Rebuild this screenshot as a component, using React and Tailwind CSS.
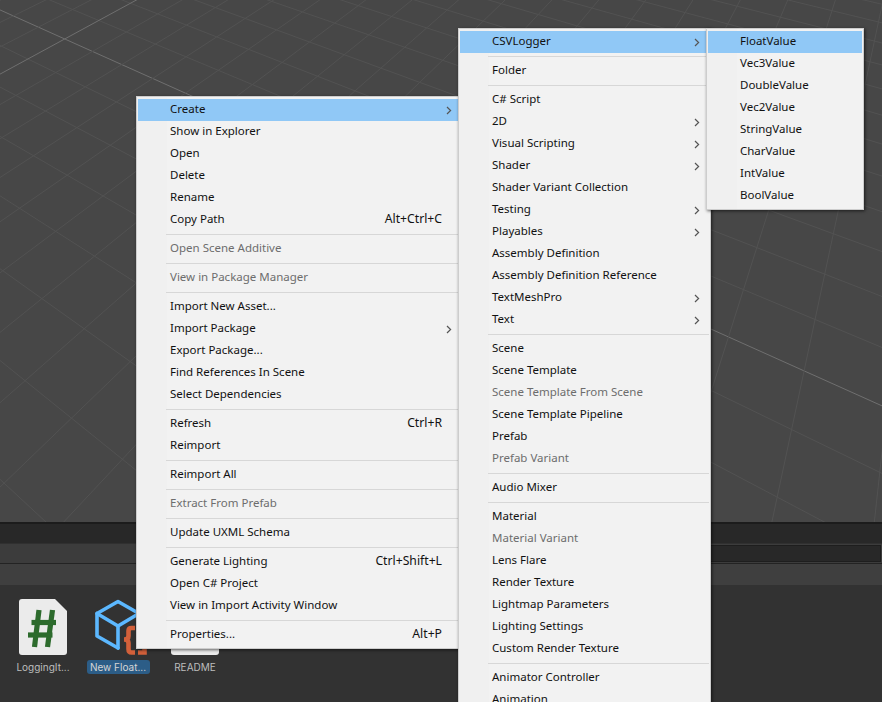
import React from "react";

const VA = [-980, -430];
const VB = [981, -459];

function gridLines() {
  const out = [];
  for (let k = -32; k <= 8; k++) {
    const t = 0.002203 - 0.00016 * k;
    const dx = 980 * t, dy = 1 - 14 * t;
    const s = 4000 / Math.hypot(dx, dy);
    out.push({ key: "a" + k, x1: VA[0], y1: VA[1], x2: VA[0] + dx * s, y2: VA[1] + dy * s, axis: k === 0 });
  }
  for (let k = -30; k <= 18; k++) {
    const t = 0.00193 - 0.000107 * k;
    const dx = -VB[0] * t, dy = 1 + 15 * t;
    const s = 4000 / Math.hypot(dx, dy);
    out.push({ key: "b" + k, x1: VB[0], y1: VB[1], x2: VB[0] + dx * s, y2: VB[1] + dy * s, axis: k === 0 });
  }
  return out;
}

const SEP = "-";
const menu1 = [
  ["Create", { arrow: true, active: true }], ["Show in Explorer"], ["Open"], ["Delete"], ["Rename"], ["Copy Path", { sc: "Alt+Ctrl+C" }], SEP,
  ["Open Scene Additive", { off: true }], SEP,
  ["View in Package Manager", { off: true }], SEP,
  ["Import New Asset..."], ["Import Package", { arrow: true }], ["Export Package..."], ["Find References In Scene"], ["Select Dependencies"], SEP,
  ["Refresh", { sc: "Ctrl+R" }], ["Reimport"], SEP,
  ["Reimport All"], SEP,
  ["Extract From Prefab", { off: true }], SEP,
  ["Update UXML Schema"], SEP,
  ["Generate Lighting", { sc: "Ctrl+Shift+L" }], ["Open C# Project"], ["View in Import Activity Window"], SEP,
  ["Properties...", { sc: "Alt+P" }],
];
const menu2 = [
  ["CSVLogger", { arrow: true, active: true }], SEP,
  ["Folder"], SEP,
  ["C# Script"], ["2D", { arrow: true }], ["Visual Scripting", { arrow: true }], ["Shader", { arrow: true }], ["Shader Variant Collection"], ["Testing", { arrow: true }], ["Playables", { arrow: true }], ["Assembly Definition"], ["Assembly Definition Reference"], ["TextMeshPro", { arrow: true }], ["Text", { arrow: true }], SEP,
  ["Scene"], ["Scene Template"], ["Scene Template From Scene", { off: true }], ["Scene Template Pipeline"], ["Prefab"], ["Prefab Variant", { off: true }], SEP,
  ["Audio Mixer"], SEP,
  ["Material"], ["Material Variant", { off: true }], ["Lens Flare"], ["Render Texture"], ["Lightmap Parameters"], ["Lighting Settings"], ["Custom Render Texture"], SEP,
  ["Animator Controller"], ["Animation"],
];
const menu3 = [
  ["FloatValue", { active: true }], ["Vec3Value"], ["DoubleValue"], ["Vec2Value"], ["StringValue"], ["CharValue"], ["IntValue"], ["BoolValue"],
];

function Chevron({ className }) {
  return (
    <svg width="6" height="9" viewBox="0 0 6 9" className={"absolute top-[7px] " + className}>
      <path d="M1 1 L4.6 4.5 L1 8" fill="none" stroke="#555555" strokeWidth="1.2" />
    </svg>
  );
}

function Menu({ items, className, rowClass = "pr-[14px]", chevronClass = "right-[9px]" }) {
  return (
    <div className={"absolute border border-[#cdcdcd] bg-[linear-gradient(to_right,#f0f0f0_30px,#f2f2f2_30px)] px-px py-[2px] shadow-[1px_1px_3px_rgba(0,0,0,0.6)] text-[11.5px] leading-[20px] [font-family:'Noto_Sans',sans-serif] " + className}>
      {items.map((it, i) => {
        if (it === SEP) return <div key={i} className="ml-[28px] my-[3px] h-px bg-[#d7d7d7]" />;
        const [label, o = {}] = it;
        return (
          <div key={i} className={"relative flex h-[22px] items-center justify-between pb-[2px] pl-[32px] " + rowClass + " " + (o.active ? "bg-[#90c8f6] " : "") + (o.off ? "text-[#6d6d6d]" : "text-[#111111]")}>
            <span className="whitespace-nowrap">{label}</span>
            {o.sc && <span className="whitespace-nowrap text-[12.2px]">{o.sc}</span>}
            {o.arrow && <Chevron className={chevronClass} />}
          </div>
        );
      })}
    </div>
  );
}

function DocIcon({ children }) {
  return (
    <svg width="48" height="56" viewBox="0 0 48 56" className="block">
      <path d="M3 0 H36 L48 12 V53 a3 3 0 0 1 -3 3 H3 a3 3 0 0 1 -3 -3 V3 a3 3 0 0 1 3 -3 Z" fill="#ebebeb" />
      {children}
    </svg>
  );
}

function Asset({ label, selected, className = "", children }) {
  return (
    <div className={"flex w-[76px] flex-col items-center " + className}>
      <div className="flex h-[56px] w-[58px] items-center justify-center">{children}</div>
      <div className={"mt-[5px] flex h-[14px] items-center justify-center rounded-[3px] text-[10px] leading-[14px] whitespace-nowrap [font-family:Inter,sans-serif] " + (selected ? "w-[63px] bg-[#2c5d87] text-[#d6d6d6]" : "text-[#bdbdbd]")}>{label}</div>
    </div>
  );
}

export default function App() {
  const lines = gridLines();
  return (
    <div className="relative flex h-[702px] w-[882px] flex-col overflow-hidden bg-[#323232]">
      <div className="h-[522px] shrink-0 bg-[#474747]">
        <svg width="882" height="522" viewBox="0 0 882 522" className="block">
          {lines.map((l) => (
            <line key={l.key} x1={l.x1} y1={l.y1} x2={l.x2} y2={l.y2} stroke={l.axis ? "#6f6f6f" : "#525252"} strokeWidth="1" />
          ))}
        </svg>
      </div>
      <div className="h-[21px] shrink-0 border-t-2 border-[#1c1c1c] bg-[#282828]" />
      <div className="flex h-[20px] shrink-0 items-center justify-end border-t border-[#303030] bg-[#3c3c3c] pr-px">
        <div className="h-[17px] w-[600px] border border-[#1e1e1e] bg-[#282828]" />
      </div>
      <div className="h-[22px] shrink-0 border-t border-[#232323] bg-[#3f3f3f]" />
      <div className="flex flex-1 pl-[5px] pt-[14px]">
        <Asset label="LoggingIt...">
          <DocIcon>
            <g stroke="#2d6b2d" strokeWidth="5.2" fill="none">
              <path d="M20 11 L15.5 48" />
              <path d="M33.5 11 L28.5 48" />
              <path d="M12.5 23.5 H37" />
              <path d="M9 36 H33.5" />
            </g>
          </DocIcon>
        </Asset>
        <Asset label="New Float..." selected className="-ml-px mr-px">
          <svg width="58" height="56" viewBox="0 0 58 56" className="block">
            <g fill="none" stroke="#5cb8ff" strokeWidth="3.6" strokeLinejoin="round" strokeLinecap="round">
              <path d="M29 49 L8 37 V14.5 L29 2.5 L50 14.5 V26" />
              <path d="M8 14.5 L29 27 L50 14.5" />
              <path d="M29 27 V49" />
            </g>
            <g fill="none" stroke="#d2603a" strokeWidth="4.6">
              <path d="M46 29 H42.5 Q39.5 29 39.5 32 V37 Q39.5 40.5 35 40.5 Q39.5 40.5 39.5 44 V50 Q39.5 53.5 42.5 53.5 H46" />
              <path d="M49 29 H55.5 V53.5 H49" />
            </g>
          </svg>
        </Asset>
        <Asset label="README">
          <DocIcon />
        </Asset>
      </div>
      <Menu items={menu1} className="left-[136px] top-[96px] w-[324px]" rowClass="pr-[16px]" chevronClass="right-[6px]" />
      <Menu items={menu2} className="left-[458px] top-[28px] w-[253px]" />
      <Menu items={menu3} className="left-[706px] top-[28px] w-[158px]" />
    </div>
  );
}
